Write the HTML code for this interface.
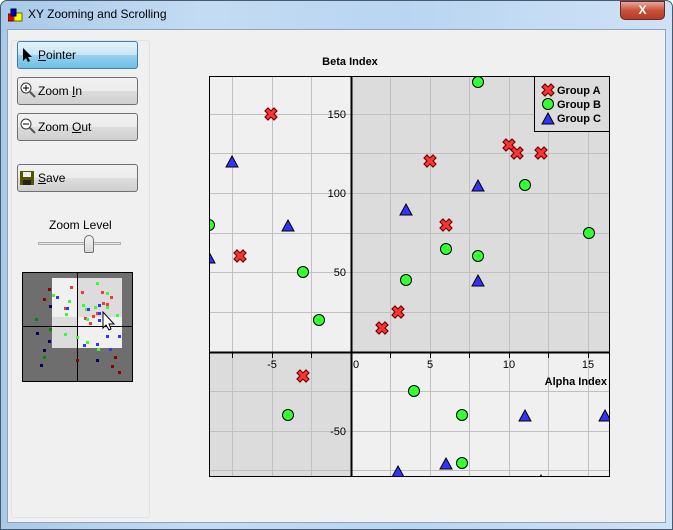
<!DOCTYPE html>
<html><head><style>
*{margin:0;padding:0;box-sizing:border-box}
body{width:673px;height:530px;overflow:hidden;background:#fff;font-family:"Liberation Sans",sans-serif;font-size:12px;position:relative}
.frame{position:absolute;left:0;top:0;width:673px;height:530px;border-radius:7px 7px 0 0;background:linear-gradient(90deg,#a9c9e8 0%,#c4dcf3 30%,#b9d5f1 60%,#cfe2f6 100%);border:1px solid #4a5a6e}
.client{position:absolute;left:7px;top:29px;width:659px;height:494px;background:#f0f0f0;border:1px solid #8ea4bc}
.title{position:absolute;left:28px;top:7px;font-size:12px;color:#000}
.close{position:absolute;left:620px;top:1px;width:45px;height:19px;border-radius:0 0 5px 5px;background:linear-gradient(#e9a89a,#c8503a 50%,#b83a22);border:1px solid #6b2a20;color:#fff;font-weight:bold;text-align:center;font-size:12px;line-height:17px}
.panel{position:absolute;left:11px;top:40px;width:139px;height:478px;border:1px solid #dfe3e8;border-radius:3px}
.btn{position:absolute;left:17px;width:121px;height:28px;border:1px solid #707070;border-radius:3px;background:linear-gradient(#f2f2f2 0%,#ebebeb 50%,#dddddd 51%,#cfcfcf 100%);font-size:12px;line-height:26px;padding-left:20px}
.btn.on{background:linear-gradient(#e5f4fc 0%,#c4e5f6 50%,#98d1ef 51%,#6cbfe8 100%);border-color:#3c7fb1}
.btn svg{position:absolute;left:2px;top:5px}
</style></head><body>
<div class="frame"></div>
<svg style="position:absolute;left:8px;top:8px" width="16" height="14"><rect x="0" y="6" width="7" height="7" fill="#e00" stroke="#600"/><rect x="6" y="5" width="8" height="8" fill="#ff0" stroke="#660"/><rect x="3" y="1" width="5" height="7" fill="#00c" stroke="#003"/></svg>
<div class="title">XY Zooming and Scrolling</div>
<div class="close">X</div>
<div class="client"></div>
<div class="panel"></div>
<div class="btn on" style="top:41px"><svg width="14" height="16"><path d="M3 1 L3 14 L6 11 L8 15 L10 14 L8 10 L12 10 Z" fill="#000"/></svg><u>P</u>ointer</div>
<div class="btn" style="top:77px"><svg width="16" height="16" style="top:4px"><circle cx="6" cy="6" r="5" fill="#fff" stroke="#333"/><path d="M3 6h6M6 3v6" stroke="#000"/><path d="M10 10l5 5" stroke="#555" stroke-width="2"/></svg>Zoom <u>I</u>n</div>
<div class="btn" style="top:113px"><svg width="16" height="16" style="top:4px"><circle cx="6" cy="6" r="5" fill="#fff" stroke="#333"/><path d="M3 6h6" stroke="#000"/><path d="M10 10l5 5" stroke="#555" stroke-width="2"/></svg>Zoom <u>O</u>ut</div>
<div class="btn" style="top:164px"><svg width="14" height="14" style="top:6px"><rect x="0" y="0" width="14" height="14" fill="#555500"/><rect x="3" y="1" width="8" height="5" fill="#eee"/><rect x="3" y="9" width="8" height="5" fill="#222"/></svg><u>S</u>ave</div>
<div style="position:absolute;left:49px;top:218px;font-size:12px">Zoom Level</div>
<div style="position:absolute;left:38px;top:242px;width:83px;height:3px;border:1px solid #b0b0b0;background:#e7e7e7"></div>
<div style="position:absolute;left:84px;top:235px;width:10px;height:18px;border:1px solid #707070;border-radius:5px 5px 2px 2px;background:linear-gradient(#f4f4f4,#d8d8d8)"></div>
<svg style="position:absolute;left:22px;top:272px" width="111" height="110">
<rect x="0.5" y="0.5" width="110" height="109" fill="#6e6e6e" stroke="#000"/>
<rect x="30" y="6" width="70" height="70" fill="#f0f0f0"/>
<rect x="56" y="6" width="44" height="39" fill="#dcdcdc"/><rect x="30" y="45" width="26" height="31" fill="#dcdcdc"/>
<path d="M55.5 0v110M0 54.5h111" stroke="#000"/>
<g fill="#f33"><rect x="42" y="35" width="3" height="3"/><rect x="62" y="45" width="3" height="3"/><rect x="80" y="30" width="3" height="3"/><rect x="84" y="31" width="3" height="3"/><rect x="70" y="43" width="3" height="3"/><rect x="67" y="50" width="3" height="3"/><rect x="88" y="24" width="3" height="3"/><rect x="74" y="40" width="3" height="3"/><rect x="48" y="14" width="3" height="3"/><rect x="59" y="19" width="3" height="3"/><rect x="79" y="19" width="3" height="3"/></g>
<g fill="#800"><rect x="26" y="16" width="3" height="3"/><rect x="21" y="26" width="3" height="3"/><rect x="54" y="87" width="3" height="3"/><rect x="92" y="84" width="3" height="3"/><rect x="89" y="93" width="3" height="3"/><rect x="96" y="99" width="3" height="3"/></g>
<g fill="#3f3"><rect x="74" y="10" width="3" height="3"/><rect x="84" y="20" width="3" height="3"/><rect x="30" y="22" width="3" height="3"/><rect x="46" y="28" width="3" height="3"/><rect x="63" y="36" width="3" height="3"/><rect x="72" y="34" width="3" height="3"/><rect x="94" y="42" width="3" height="3"/><rect x="84" y="34" width="3" height="3"/><rect x="60" y="32" width="3" height="3"/><rect x="64" y="46" width="3" height="3"/><rect x="43" y="41" width="3" height="3"/><rect x="54" y="64" width="3" height="3"/><rect x="64" y="69" width="3" height="3"/><rect x="75" y="76" width="3" height="3"/><rect x="42" y="61" width="3" height="3"/></g>
<g fill="#080"><rect x="13" y="46" width="3" height="3"/><rect x="27" y="56" width="3" height="3"/><rect x="21" y="84" width="3" height="3"/></g>
<g fill="#33f"><rect x="34" y="24" width="3" height="3"/><rect x="44" y="35" width="3" height="3"/><rect x="65" y="36" width="3" height="3"/><rect x="76" y="40" width="3" height="3"/><rect x="76" y="47" width="3" height="3"/><rect x="76" y="32" width="3" height="3"/><rect x="84" y="63" width="3" height="3"/><rect x="96" y="63" width="3" height="3"/><rect x="61" y="72" width="3" height="3"/><rect x="74" y="71" width="3" height="3"/><rect x="87" y="76" width="3" height="3"/></g>
<g fill="#006"><rect x="27" y="33" width="3" height="3"/><rect x="14" y="60" width="3" height="3"/><rect x="26" y="68" width="3" height="3"/><rect x="21" y="77" width="3" height="3"/><rect x="18" y="92" width="3" height="3"/><rect x="74" y="87" width="3" height="3"/></g>
<path d="M81 40 L81 56 L84 53 L87 58 L89 57 L87 52 L92 52 Z" fill="#fff" stroke="#000"/>
</svg>
<svg style="position:absolute;left:0;top:0" width="673" height="530">
<defs>
<g id="x"><path d="M-3 -3L3 3M3 -3L-3 3" stroke="#600" stroke-width="5.4" stroke-linecap="square"/><path d="M-3 -3L3 3M3 -3L-3 3" stroke="#f33" stroke-width="3.2" stroke-linecap="square"/></g>
<circle id="c" r="5.5" fill="#3f3" stroke="#000"/>
<path id="t" d="M0 -6L6 5L-6 5Z" fill="#33f" stroke="#000"/>
<clipPath id="pa"><rect x="209" y="76" width="400" height="400"/></clipPath>
</defs>
<text x="350" y="65" font-size="11" font-weight="bold" text-anchor="middle" font-family="Liberation Sans">Beta Index</text>
<rect x="209" y="76" width="400" height="400" fill="#f0f0f0"/>
<rect x="351" y="76" width="258" height="276" fill="#dcdcdc"/>
<rect x="209" y="352" width="142" height="124" fill="#dcdcdc"/>
<g stroke="#c0c0c0" stroke-width="1">
<path d="M232.5 76v400M272.5 76v400M311.5 76v400M390.5 76v400M430.5 76v400M469.5 76v400M509.5 76v400M548.5 76v400M588.5 76v400"/>
<path d="M209 114.5h400M209 153.5h400M209 193.5h400M209 233.5h400M209 272.5h400M209 312.5h400M209 391.5h400M209 431.5h400M209 470.5h400"/>
</g>
<g clip-path="url(#pa)">
<use href="#x" x="271" y="114"/><use href="#x" x="240" y="256"/><use href="#x" x="430" y="161"/><use href="#x" x="446" y="225"/><use href="#x" x="398" y="312"/><use href="#x" x="382" y="328"/><use href="#x" x="509" y="145"/><use href="#x" x="517" y="153"/><use href="#x" x="541" y="153"/><use href="#x" x="303" y="376"/>
<use href="#c" x="478" y="82"/><use href="#c" x="209" y="225"/><use href="#c" x="303" y="272"/><use href="#c" x="319" y="320"/><use href="#c" x="446" y="249"/><use href="#c" x="478" y="256"/><use href="#c" x="406" y="280"/><use href="#c" x="525" y="185"/><use href="#c" x="589" y="233"/><use href="#c" x="414" y="391"/><use href="#c" x="462" y="415"/><use href="#c" x="288" y="415"/><use href="#c" x="462" y="463"/><use href="#c" x="478" y="482"/>
<use href="#t" x="232" y="162"/><use href="#t" x="288" y="226"/><use href="#t" x="209" y="258"/><use href="#t" x="406" y="210"/><use href="#t" x="478" y="186"/><use href="#t" x="478" y="281"/><use href="#t" x="525" y="416"/><use href="#t" x="605" y="416"/><use href="#t" x="446" y="464"/><use href="#t" x="398" y="472"/><use href="#t" x="541" y="481"/>
</g>
<path d="M351.5 76v400M209 352.5h400" stroke="#000" stroke-width="2"/>
<g stroke="#000"><path d="M232.5 352v6M272.5 352v6M311.5 352v6M390.5 352v6M430.5 352v6M469.5 352v6M509.5 352v6M548.5 352v6M588.5 352v6"/></g>
<rect x="209.5" y="76.5" width="400" height="400" fill="none" stroke="#000"/>
<g font-family="Liberation Sans" font-size="11" fill="#000">
<text x="346" y="118" text-anchor="end">150</text><text x="346" y="197" text-anchor="end">100</text><text x="346" y="276" text-anchor="end">50</text><text x="346" y="435" text-anchor="end">-50</text>
<text x="272" y="368" text-anchor="middle">-5</text><text x="356" y="368" text-anchor="middle">0</text><text x="430" y="368" text-anchor="middle">5</text><text x="509" y="368" text-anchor="middle">10</text><text x="588" y="368" text-anchor="middle">15</text>
<text x="607" y="385" text-anchor="end" font-weight="bold">Alpha Index</text>
</g>
<rect x="534.5" y="76.5" width="75" height="55" fill="#dcdcdc" stroke="#000"/>
<use href="#x" x="548" y="90"/><use href="#c" x="548" y="104"/><use href="#t" x="548" y="119"/>
<g font-family="Liberation Sans" font-size="11" font-weight="bold"><text x="557" y="94">Group A</text><text x="557" y="108">Group B</text><text x="557" y="122">Group C</text></g>
</svg>
</body></html>
